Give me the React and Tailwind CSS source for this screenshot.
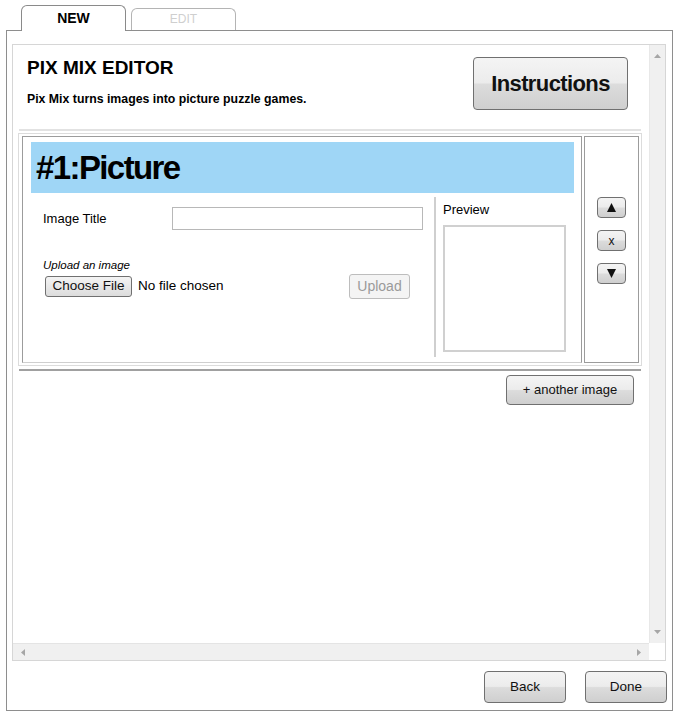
import React from "react";

const btn =
  "flex items-center justify-center rounded-[4px] border border-[#707070] bg-[linear-gradient(#f4f4f4_0%,#ececec_48%,#dcdcdc_52%,#cfcfcf_100%)] text-[#111]";

function Tri({ dir = "up", color = "#111", w = 9, h = 8 }) {
  const pts = {
    up: `${w / 2},0 ${w},${h} 0,${h}`,
    down: `0,0 ${w},0 ${w / 2},${h}`,
    left: `${w},0 ${w},${h} 0,${h / 2}`,
    right: `0,0 ${w},${h / 2} 0,${h}`,
  }[dir];
  return (
    <svg width={w} height={h} viewBox={`0 0 ${w} ${h}`}>
      <polygon points={pts} fill={color} />
    </svg>
  );
}

export default function App() {
  return (
    <div className="w-[676px] h-[716px] bg-white font-['Liberation_Sans',Arial,sans-serif] text-black">
      {/* Tabs */}
      <div className="flex items-end h-[30px] pl-[21px] gap-[5px]">
        <div className="relative z-10 -mb-px h-[26px] w-[105px] rounded-t-[6px] border border-b-0 border-[#8a8a8a] bg-white flex justify-center pt-[4px] text-[14px] font-bold leading-[17px]">
          NEW
        </div>
        <div className="h-[22px] w-[105px] rounded-t-[6px] border border-b-0 border-[#b4b4b4] bg-white flex justify-center pt-[3px] text-[12px] leading-[14px] text-[#cfcfcf]">
          EDIT
        </div>
      </div>

      {/* Frame */}
      <div className="ml-[6px] w-[667px] h-[681px] border border-[#8e8e8e] pt-[13px] pl-[5px]">
        <div className="w-[654px] h-[617px] border border-[#d6d6d6] flex flex-col">
          <div className="flex h-[598px]">
            {/* Content */}
            <div className="w-[636px] flex flex-col">
              {/* Header */}
              <div className="h-[84px] flex justify-between">
                <div className="pl-[14px] pt-[12px]">
                  <div className="text-[19px] font-bold leading-[22px]">PIX MIX EDITOR</div>
                  <div className="mt-[12px] text-[12.3px] font-bold leading-[16px]">
                    Pix Mix turns images into picture puzzle games.
                  </div>
                </div>
                <button
                  className={`${btn} mt-[12px] mr-[21px] w-[155px] h-[53px] text-[22px] font-bold tracking-[-0.6px]`}
                >
                  Instructions
                </button>
              </div>
              <div className="ml-[6px] w-[622px] h-[2px] bg-[#e2e2e2]" />

              {/* Picture table */}
              <div className="mt-[2px] ml-[5px] w-[624px] h-[233px] border border-[#dcdcdc] pt-[2px] pl-[3px] flex gap-[2px]">
                <div className="w-[560px] h-[227px] border border-[#9c9c9c] border-b-[#cfcfcf] flex flex-col">
                  <div className="mt-[5px] ml-[8px] w-[543px] h-[51px] bg-[#9fd6f6] flex items-center pl-[5px] text-[33px] font-bold tracking-[-1.6px]">
                    #1:Picture
                  </div>
                  <div className="mt-[4px] h-[160px] flex">
                    <div className="w-[411px] pt-[10px] flex flex-col">
                      <div className="flex items-center pl-[20px]">
                        <span className="w-[129px] text-[13px] leading-[16px]">Image Title</span>
                        <div className="w-[251px] h-[23px] border border-[#b8b8b8] bg-white" />
                      </div>
                      <div className="mt-[28px] pl-[20px] text-[11.5px] italic leading-[14px]">Upload an image</div>
                      <div className="mt-[2px] h-[25px] flex items-center">
                        <button className="ml-[22px] w-[87px] h-[21px] flex items-center justify-center rounded-[3px] border border-[#707070] bg-[linear-gradient(#f4f4f4,#dcdcdc)] text-[13.5px] text-[#111]">
                          Choose File
                        </button>
                        <span className="ml-[6px] text-[13.5px]">No file chosen</span>
                        <button className="ml-auto mr-[24px] w-[61px] h-[25px] flex items-center justify-center rounded-[3px] border border-[#bdbdbd] bg-[#f4f4f4] text-[14px] text-[#9a9a9a]">
                          Upload
                        </button>
                      </div>
                    </div>
                    <div className="border-l-2 border-[#cfcfcf] pl-[7px] pt-[5px]">
                      <div className="text-[13px] leading-[16px]">Preview</div>
                      <div className="mt-[7px] w-[123px] h-[127px] border-2 border-[#d0d0d0]" />
                    </div>
                  </div>
                </div>
                <div className="w-[55px] h-[227px] border border-[#9c9c9c] flex flex-col items-center pt-[60px] gap-[12px]">
                  <button className={`${btn} w-[29px] h-[21px] rounded-[3px]`}>
                    <Tri dir="up" w={9} h={9} />
                  </button>
                  <button className={`${btn} w-[29px] h-[21px] rounded-[3px] text-[12px]`}>x</button>
                  <button className={`${btn} w-[29px] h-[21px] rounded-[3px]`}>
                    <Tri dir="down" w={9} h={9} />
                  </button>
                </div>
              </div>
              <div className="mt-[3px] ml-[6px] w-[622px] h-[2px] bg-[#a0a0a0]" />
              <div className="mt-[4px] flex justify-end pr-[15px]">
                <button className={`${btn} w-[128px] h-[30px] text-[13px]`}>+ another image</button>
              </div>
            </div>

            {/* Vertical scrollbar */}
            <div className="w-[16px] bg-[#f0f0f0] border-l border-[#e8e8e8] flex flex-col items-center justify-between py-[9px]">
              <Tri dir="up" color="#a6a6a6" w={7} h={4} />
              <Tri dir="down" color="#a6a6a6" w={7} h={4} />
            </div>
          </div>

          {/* Horizontal scrollbar */}
          <div className="flex h-[17px]">
            <div className="w-[636px] bg-[#f0f0f0] border-t border-[#e4e4e4] flex items-center justify-between px-[8px]">
              <Tri dir="left" color="#a6a6a6" w={4} h={7} />
              <Tri dir="right" color="#a6a6a6" w={4} h={7} />
            </div>
            <div className="w-[16px] bg-white" />
          </div>
        </div>

        {/* Footer buttons */}
        <div className="mt-[10px] flex justify-end gap-[19px] pr-[5px]">
          <button className={`${btn} w-[82px] h-[32px] text-[13.5px]`}>Back</button>
          <button className={`${btn} w-[82px] h-[32px] text-[13.5px]`}>Done</button>
        </div>
      </div>
    </div>
  );
}
